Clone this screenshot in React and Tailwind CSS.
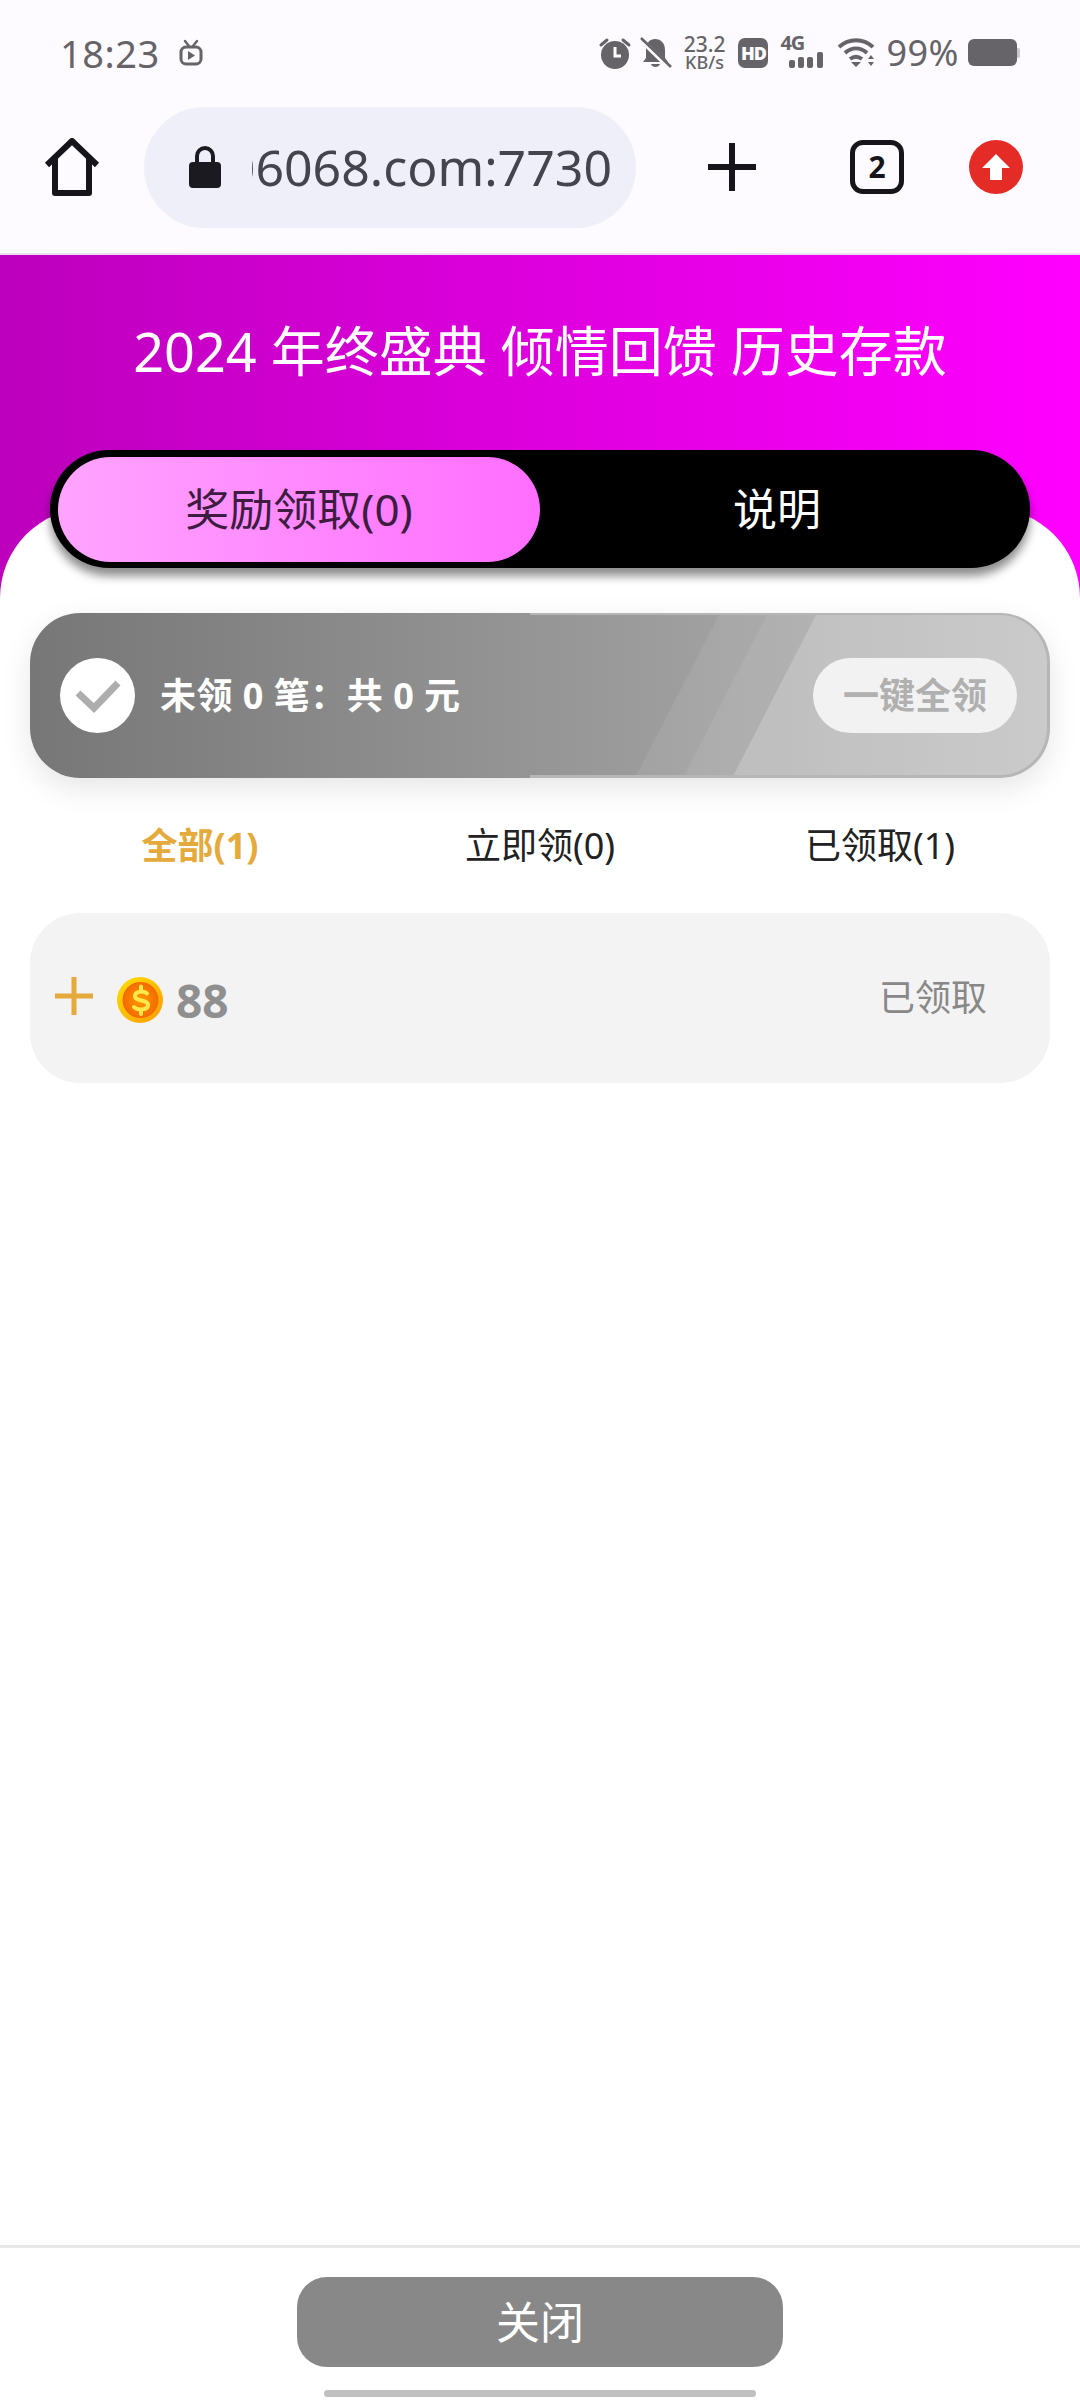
const FONT = "font-['Noto_Sans','Noto_Sans_CJK_SC',sans-serif]";

function AlarmIcon() {
  return (
    <svg width="34" height="34" viewBox="0 0 34 34" className="text-[#666468]">
      <circle cx="17" cy="19" r="14" fill="currentColor" />
      <path d="M17 11v9h6" fill="none" stroke="#fff" strokeWidth="3" />
      <path d="M3 9l6-5M31 9l-6-5" stroke="currentColor" strokeWidth="3" strokeLinecap="round" />
    </svg>
  );
}

function MutedBell() {
  return (
    <svg width="32" height="32" viewBox="0 0 32 32" className="text-[#666468]">
      <path d="M15 2c6 0 10 4 10 11v8l3 4H3l3-4v-9C6 6 10 2 15 2zM11 27h9c-1 4-8 4-9 0z" fill="currentColor" />
      <path d="M0 2l30 29" stroke="#fdfbff" strokeWidth="5" />
      <path d="M1 1l30 29" stroke="currentColor" strokeWidth="2.5" />
    </svg>
  );
}

function SignalIcon() {
  return (
    <div className="relative w-[46px] h-[32px] text-[#666468]">
      <span className="absolute left-0 top-[-4px] text-[20px] leading-[20px] font-bold tracking-[-1px]">4G</span>
      <svg width="46" height="32" viewBox="0 0 46 32" className="absolute left-0 top-0">
        <rect x="9" y="23" width="6" height="8" rx="2" fill="currentColor" />
        <rect x="18" y="20" width="6" height="11" rx="2" fill="currentColor" />
        <rect x="27" y="20" width="6" height="11" rx="2" fill="currentColor" />
        <rect x="37" y="15" width="6" height="16" rx="2" fill="currentColor" />
      </svg>
    </div>
  );
}

function WifiIcon() {
  return (
    <svg width="38" height="30" viewBox="0 0 38 30" className="text-[#666468]">
      <path d="M2 9c10-9 24-9 34 0M8 15c7-6 15-6 22 0M13 21c4-3 8-3 12 0" fill="none" stroke="currentColor" strokeWidth="4" />
      <path d="M14 24h10l-5 5zM31 21l3-4 3 4zM31 24h6l-3 4z" fill="currentColor" />
    </svg>
  );
}

function TvIcon() {
  return (
    <svg width="26" height="28" viewBox="0 0 26 28" className="text-[#666468]">
      <path d="M7 2l4 5M19 2l-4 5" stroke="currentColor" strokeWidth="2.5" strokeLinecap="round" />
      <rect x="3" y="8" width="20" height="17" rx="5" fill="none" stroke="currentColor" strokeWidth="3" />
      <path d="M10 12l7 4.500-7 4.500z" fill="currentColor" />
    </svg>
  );
}

function CoinIcon() {
  return (
    <svg width="46" height="46" viewBox="0 0 46 46">
      <defs>
        <linearGradient id="coinRim" x1="0" y1="0" x2="1" y2="1">
          <stop offset="0" stopColor="#ffe000" />
          <stop offset="1" stopColor="#ff9a00" />
        </linearGradient>
        <radialGradient id="coinFace">
          <stop offset="0" stopColor="#ff9a00" />
          <stop offset="1" stopColor="#f26a00" />
        </radialGradient>
      </defs>
      <circle cx="23" cy="23" r="23" fill="url(#coinRim)" />
      <circle cx="23.500" cy="23" r="18" fill="url(#coinFace)" />
      <path d="M30 16.500c-2-2.500-12-3-12 2.500 0 6 13 3 13 9 0 5.500-11 5.500-14 2M24 9.500v4M24 33v4" fill="none" stroke="#ffe84a" strokeWidth="4" strokeLinecap="round" />
    </svg>
  );
}

function StatusBar() {
  return (
    <div className="h-[107px] pb-[2px] pl-[60px] pr-[60px] flex items-center justify-between text-[#666468]">
      <div className="flex items-center gap-[18px]">
        <span className="text-[38px] leading-none tracking-[0.5px]">18:23</span>
        <TvIcon />
      </div>
      <div className="flex items-center">
        <AlarmIcon />
        <div className="w-[8px]" />
        <MutedBell />
        <div className="w-[12px]" />
        <div className="flex flex-col items-center leading-none font-medium">
          <span className="text-[21px] leading-[18px]">23.2</span>
          <span className="text-[18px] leading-[18px]">KB/s</span>
        </div>
        <div className="w-[13px]" />
        <div className="w-[30px] h-[30px] rounded-[7px] bg-[#666468] text-[#fdfbff] text-[18px] font-black flex items-center justify-center leading-none tracking-[-1px]">HD</div>
        <div className="w-[12px]" />
        <SignalIcon />
        <div className="w-[11px]" />
        <WifiIcon />
        <div className="w-[11px]" />
        <span className="text-[36px] leading-none tracking-[0.5px]">99%</span>
        <div className="w-[9px]" />
        <div className="flex items-center">
          <div className="w-[49px] h-[27px] rounded-[6px] bg-[#666468]" />
          <div className="w-[3px] h-[10px] rounded-r-[2px] bg-[#c9c8ca]" />
        </div>
      </div>
    </div>
  );
}

function Toolbar() {
  return (
    <div className="h-[148px] pb-[26px] flex items-center border-b-[2px] border-[#ecdcf0]">
      <div className="w-[144px] flex justify-start pl-[44px]">
        <svg width="56" height="58" viewBox="0 0 56 58" fill="none" stroke="#17151c" strokeWidth="6" strokeLinejoin="round">
          <path d="M3 27L28 3l25 24M11 20v35h34V20" />
        </svg>
      </div>
      <div className="w-[492px] h-[121px] rounded-full bg-[#eeeff8] flex items-center pl-[44px] pr-[24px]">
        <svg width="34" height="44" viewBox="0 0 34 44" className="shrink-0">
          <path d="M9 18v-7a8 8 0 0 1 16 0v7" fill="none" stroke="#1b1a20" strokeWidth="4" />
          <rect x="1" y="17" width="32" height="26" rx="4" fill="#1b1a20" />
        </svg>
        <div className="ml-[30px] w-[362px] overflow-hidden flex justify-end">
          <span className="text-[50px] leading-none text-[#44444e] whitespace-nowrap">106068.com:7730</span>
        </div>
      </div>
      <div className="flex-1 flex items-center">
        <svg width="48" height="48" viewBox="0 0 48 48" className="ml-[72px]">
          <path d="M24 1v46M1 24h46" stroke="#17151c" strokeWidth="6" strokeLinecap="round" />
        </svg>
        <div className="ml-[94px] w-[54px] h-[54px] rounded-[13px] border-[5px] border-[#17151c] flex items-center justify-center text-[#17151c] text-[30px] font-bold leading-none">2</div>
        <div className="ml-[65px] w-[54px] h-[54px] rounded-full bg-[#e52b26] flex items-center justify-center">
          <svg width="30" height="28" viewBox="0 0 30 28">
            <path d="M15 1l14 14h-8v12H9V15H1z" fill="#fff" />
          </svg>
        </div>
      </div>
    </div>
  );
}

function HeroTabs() {
  return (
    <div className="relative z-10 mx-[50px] mt-[71px] h-[118px] rounded-full bg-black shadow-[0_8px_10px_rgba(0,0,0,0.45)] p-[6px_8px] flex items-center">
      <div className="w-[482px] h-[105px] rounded-full bg-[linear-gradient(90deg,#ffa4ff,#ff6eff)] flex items-center justify-center text-[44px] leading-none text-[#3d1c3f]">
        奖励领取(0)
      </div>
      <div className="flex-1 text-center text-[44px] leading-none text-white pr-[8px]">说明</div>
    </div>
  );
}

function SummaryCard() {
  return (
    <div className="relative h-[165px] rounded-[50px] overflow-hidden bg-[linear-gradient(90deg,#777777,#b4b4b4)] shadow-[0_10px_30px_rgba(0,0,0,0.1)] flex items-center justify-between pl-[30px] pr-[33px]">
      <div className="absolute inset-0 bg-white/[0.07] [clip-path:polygon(690px_0,1020px_0,1020px_165px,605px_165px)]" />
      <div className="absolute inset-0 bg-white/[0.07] [clip-path:polygon(738px_0,1020px_0,1020px_165px,653px_165px)]" />
      <div className="absolute inset-0 bg-white/[0.2] [clip-path:polygon(787px_0,1020px_0,1020px_165px,702px_165px)]" />
      <div className="absolute inset-0 rounded-[50px] border-b-[3px] border-r-[3px] border-t-[2px] border-[#b6b6b6] [clip-path:polygon(500px_0,1020px_0,1020px_165px,500px_165px)]" />
      <div className="relative flex items-center">
        <div className="w-[75px] h-[75px] rounded-full bg-white flex items-center justify-center">
          <svg width="46" height="34" viewBox="0 0 46 34">
            <path d="M3 14l16 15L43 4" fill="none" stroke="#adadad" strokeWidth="7" />
          </svg>
        </div>
        <span className="ml-[25px] text-[36px] leading-none font-bold text-white tracking-[0.5px] whitespace-pre">未领 0 笔：共 0 元</span>
      </div>
      <div className="relative w-[204px] h-[75px] rounded-full bg-[#f2f2f2] flex items-center justify-center text-[36px] leading-none font-bold text-[#b0b0b0]">
        一键全领
      </div>
    </div>
  );
}

function FilterTabs() {
  return (
    <div className="mt-[44px] h-[48px] grid grid-cols-3 items-center text-center text-[36px] leading-none text-[#222]">
      <span className="font-bold text-[#e4aa3c] pr-[0px]">全部(1)</span>
      <span>立即领(0)</span>
      <span>已领取(1)</span>
    </div>
  );
}

function RewardRow() {
  return (
    <div className="mt-[43px] h-[170px] rounded-[50px] bg-[#f3f3f3] flex items-center pl-[25px] pr-[63px]">
      <svg width="38" height="38" viewBox="0 0 38 38" className="mb-[5px]">
        <path d="M19 0v38M0 19h38" stroke="#e4aa3c" strokeWidth="5" />
      </svg>
      <div className="ml-[24px] mt-[4px]"><CoinIcon /></div>
      <span className="ml-[13px] mt-[3px] text-[46px] leading-none font-bold text-[#8f8f8f]">88</span>
      <span className="ml-auto text-[36px] leading-none text-[#888]">已领取</span>
    </div>
  );
}

export default function App() {
  return (
    <div className={`${FONT} w-[1080px] h-[2400px] bg-white flex flex-col overflow-hidden`}>
      <div className="bg-[#fdfbff]">
        <StatusBar />
        <Toolbar />
      </div>

      <div className="h-[345px] bg-[linear-gradient(90deg,#bc00bc,#ff00ff)]">
        <h1 className="mt-0 pt-[68px] text-center text-[54px] leading-[56px] font-normal text-white">2024 年终盛典 倾情回馈 历史存款</h1>
        <HeroTabs />
      </div>

      <div className="-mt-[92px] flex-1 rounded-t-[90px] bg-white flex flex-col">
        <div className="px-[30px] pt-[105px] flex-1">
          <SummaryCard />
          <FilterTabs />
          <RewardRow />
        </div>
        <div className="h-[155px] border-t-[3px] border-[#e8e8e8] flex flex-col items-center">
          <button className="mt-[29px] w-[486px] h-[90px] rounded-[30px] bg-[#888888] text-[44px] leading-none text-white">关闭</button>
          <div className="mt-[23px] w-[432px] h-[7px] rounded-full bg-[#c0c0c0]" />
        </div>
      </div>
    </div>
  );
}
